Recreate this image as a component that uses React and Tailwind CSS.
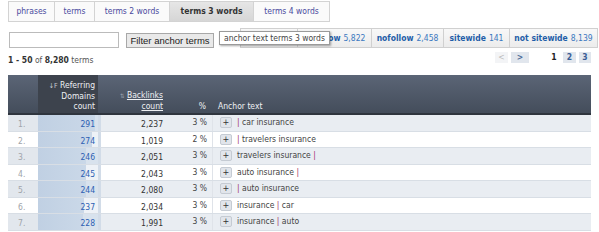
import React from 'react';

const tabs = [
  { label: 'phrases', w: 'w-[47px]' },
  { label: 'terms', w: 'w-[40px]' },
  { label: 'terms 2 words', w: 'w-[75px]' },
  { label: 'terms 3 words', w: 'w-[84px]', active: true },
  { label: 'terms 4 words', w: 'w-[76px]' },
];

// first box sits fully under the tooltip, so no label is drawn there
const filters = [
  { name: '', count: '', w: 'w-[57px]' },
  { name: 'dofollow', count: '5,822', w: 'w-[74px]' },
  { name: 'nofollow', count: '2,458', w: 'w-[72px]' },
  { name: 'sitewide', count: '141', w: 'w-[66px]' },
  { name: 'not sitewide', count: '8,139', w: 'flex-1' },
];

const rows = [
  { n: 1, rd: 291, bl: '2,237', pct: 3, text: ['', 'car insurance'] },
  { n: 2, rd: 274, bl: '1,019', pct: 2, text: ['', 'travelers insurance'] },
  { n: 3, rd: 246, bl: '2,051', pct: 3, text: ['travelers insurance', ''] },
  { n: 4, rd: 245, bl: '2,043', pct: 3, text: ['auto insurance', ''] },
  { n: 5, rd: 244, bl: '2,080', pct: 3, text: ['', 'auto insurance'] },
  { n: 6, rd: 237, bl: '2,034', pct: 3, text: ['insurance', 'car'] },
  { n: 7, rd: 228, bl: '1,991', pct: 3, text: ['insurance', 'auto'] },
];

const font = { fontFamily: '"DejaVu Sans Condensed", "DejaVu Sans", sans-serif' };

const AnchorText = ({ parts }) => {
  const [a, b] = parts;
  return (
    <span className="text-[#444]">
      {a && <span>{a}</span>}
      {a && ' '}
      <span className="text-[#a0306a]">|</span>
      {b && ' '}
      {b && <span>{b}</span>}
    </span>
  );
};

const App = () => {
  return (
    <div className="w-[599px] h-[232px] overflow-hidden bg-white text-[8.5px] px-[8px]" style={font}>
      {/* Tabs */}
      <div className="flex pt-[1px] h-[22px]">
        {tabs.map((t, i) => (
          <div
            key={t.label}
            className={`${t.w} h-[21px] flex items-center justify-center border-y border-r border-[#d3d3d3] ${i === 0 ? 'border-l' : ''} ${
              t.active ? 'bg-gradient-to-b from-[#e6e6e6] to-[#d6d6d6] font-bold text-[#333]' : 'bg-[#fafafa] text-[#4a4a9e]'
            }`}
          >
            {t.label}
          </div>
        ))}
      </div>

      {/* Filter row */}
      <div className="relative flex items-start h-[27px] pt-[6px]">
        <input className="mt-[4px] ml-[1px] w-[110px] h-[16px] border border-[#bbb] bg-white" />
        <button
          className="mt-[5px] ml-[7px] w-[88px] h-[15px] border border-[#a8a8a8] bg-[#e9e9e9] text-[9.5px] text-[#222] leading-none"
          style={{ fontFamily: '"Liberation Sans", Arial, sans-serif' }}
        >
          Filter anchor terms
        </button>
        <div className="ml-[26px] flex flex-1 h-[20px] border border-[#d0d0d0] bg-gradient-to-b from-[#f8f8f8] to-[#ececec] mr-[-7px]">
          {filters.map((f, i) => (
            <div
              key={i}
              className={`${f.w} flex items-center justify-center ${i < filters.length - 1 ? 'border-r border-[#d0d0d0]' : ''}`}
            >
              {f.name && <span className="font-bold text-[#1f5ea8]">{f.name}</span>}
              {f.count && <span className="ml-[3px] text-[#3b78c0]">{f.count}</span>}
            </div>
          ))}
        </div>
        <div className="absolute left-[211px] top-[9px] h-[14px] px-[4px] flex items-center bg-white border border-[#9a9a9a] shadow-[1px_1px_2px_rgba(0,0,0,0.35)] text-[#444] whitespace-nowrap">
          anchor text terms 3 words
        </div>
      </div>

      {/* Count + pagination */}
      <div className="flex items-center h-[17px] mt-[3px]">
        <div className="text-[#555]">
          <span className="font-bold text-[#333]">1 - 50</span> of <span className="font-bold text-[#333]">8,280</span> terms
        </div>
        <div className="ml-auto flex items-center mt-[-6px]">
          <div className="w-[13px] h-[11px] flex items-center justify-center bg-[#f3f4f6] text-[#bbb] leading-none">&lt;</div>
          <div className="ml-[3px] w-[18px] h-[11px] flex items-center justify-center bg-[#e1e6ed] text-[#4a6a96] font-bold leading-none">&gt;</div>
          <div className="ml-[21px] w-[8px] text-center font-bold text-[#222]">1</div>
          <div className="ml-[5px] w-[13px] h-[11px] flex items-center justify-center bg-[#e1e6ed] text-[#3a5e96] font-bold leading-none">2</div>
          <div className="ml-[3px] w-[12px] h-[11px] flex items-center justify-center bg-[#e1e6ed] text-[#3a5e96] font-bold leading-none">3</div>
        </div>
      </div>

      {/* Table header */}
      <div className="mt-[6px] flex h-[40px] bg-gradient-to-b from-[#5b6576] to-[#444d5b] border-b-2 border-[#2f353e] text-[#eef0f3] leading-[10px]">
        <div className="w-[30px]" />
        <div className="w-[60px] bg-[#3d434d] flex flex-col items-end justify-end pb-[2px] pr-[3px] text-right">
          <span><span className="text-[7px] text-[#c9ccd2]">↓F</span> Referring</span>
          <span>Domains</span>
          <span>count</span>
        </div>
        <div className="w-[67px] flex flex-col items-end justify-end pb-[2px] pr-[2px] text-right">
          <span><span className="text-[6px] text-[#9aa2ae]">⇅</span> <span className="underline">Backlinks</span></span>
          <span className="underline">count</span>
        </div>
        <div className="w-[48px] flex items-end justify-end pb-[2px] pr-[7px]">%</div>
        <div className="flex-1 flex items-end pb-[2px] pl-[5px]">Anchor text</div>
      </div>

      {/* Rows */}
      {rows.map((r, i) => {
        const odd = i % 2 === 0;
        const bar = Math.round((r.rd / 291) * 57);
        return (
          <div
            key={r.n}
            className={`flex h-[16.5px] border-b border-[#d8dee5] ${odd ? 'bg-[#e9edf2]' : 'bg-white'}`}
          >
            <div className={`w-[30px] pl-[10px] pt-[3px] text-[#a0a4aa] ${odd ? 'bg-[#e2e7ed]' : ''}`}>{r.n}.</div>
            <div className={`relative w-[63px] border-r-[3px] border-[#d2dce8] ${odd ? 'bg-[#d8e2ed]' : 'bg-[#eef2f7]'}`}>
              <div className="absolute left-0 top-0 bottom-0 bg-gradient-to-r from-[#c0d0e3] to-[#cad8e8]" style={{ width: bar }} />
              <div className="relative text-right pr-[3px] pt-[3px] text-[#2d5fb3]">{r.rd}</div>
            </div>
            <div className="w-[64px] text-right pr-[2px] pt-[3px] text-[#333]">{r.bl}</div>
            <div className="w-[48px] text-right pr-[5px] pt-[1px] text-[#444] border-r border-[#dfe3e9]">{r.pct} %</div>
            <div className="flex-1 flex items-center pl-[7px]">
              <div className="w-[12px] h-[11px] flex items-center justify-center bg-[#e1e5eb] border border-[#c5cbd3] rounded-[2px] text-[#333] leading-none text-[9px]">+</div>
              <div className="ml-[5px]">
                <AnchorText parts={r.text} />
              </div>
            </div>
          </div>
        );
      })}
    </div>
  );
};

export default App;
